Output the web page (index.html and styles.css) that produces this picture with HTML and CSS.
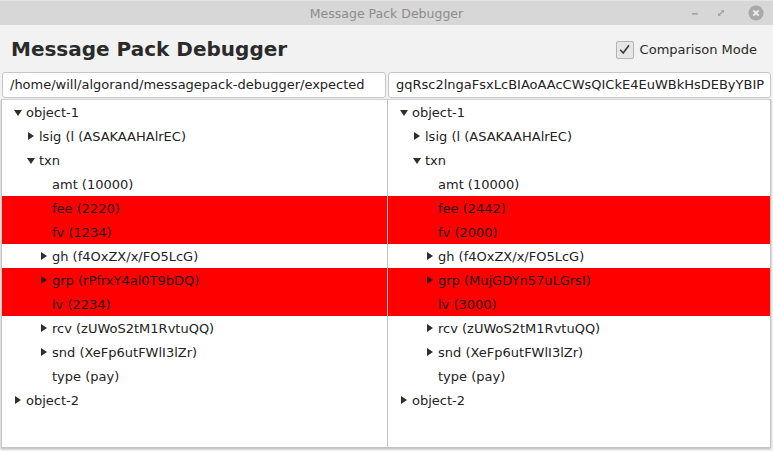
FILE: index.html
```html
<!DOCTYPE html>
<html>
<head>
<meta charset="utf-8">
<link rel="stylesheet" href="styles.css">
</head>
<body>
<div class="window">
  <div class="titlebar">
    <span class="title">Message Pack Debugger</span>
    <div class="controls">
      <svg class="ctl" width="14" height="14" viewBox="0 0 14 14"><rect x="4" y="7" width="6" height="1.6" fill="#a4a4a4"/></svg>
      <svg class="ctl" width="14" height="14" viewBox="0 0 14 14"><path d="M4 10 L4 7 L7 10 Z M10 4 L10 7 L7 4 Z" fill="#a4a4a4"/><path d="M5 9 L9 5" stroke="#a4a4a4" stroke-width="1.6"/></svg>
      <svg class="ctl close" width="16" height="16" viewBox="0 0 16 16"><circle cx="8" cy="8" r="7.5" fill="#a9a9a9"/><path d="M5.3 5.3 L10.7 10.7 M10.7 5.3 L5.3 10.7" stroke="#f2f2f2" stroke-width="1.8"/></svg>
    </div>
  </div>
  <div class="app">
    <div class="header">
      <h1 class="heading">Message Pack Debugger</h1>
      <label class="check">
        <span class="box"><svg width="13" height="13" viewBox="0 0 13 13"><path d="M2.2 6.8 L5.2 10 L11 2.2" fill="none" stroke="#3a3a3a" stroke-width="1.6"/></svg></span>
        <span class="check-label">Comparison Mode</span>
      </label>
    </div>
    <div class="fields">
      <div class="field">/home/will/algorand/messagepack-debugger/expected</div>
      <div class="field">gqRsc2lngaFsxLcBIAoAAcCWsQICkE4EuWBkHsDEByYBIP</div>
    </div>
    <div class="panes">
      <div class="pane">
        <div class="row l0"><span class="arrow down"></span>object-1</div>
        <div class="row l1"><span class="arrow right"></span>lsig (l (ASAKAAHAlrEC)</div>
        <div class="row l1"><span class="arrow down"></span>txn</div>
        <div class="row l2"><span class="arrow"></span>amt (10000)</div>
        <div class="row l2 diff"><span class="arrow"></span>fee (2220)</div>
        <div class="row l2 diff"><span class="arrow"></span>fv (1234)</div>
        <div class="row l2"><span class="arrow right"></span>gh (f4OxZX/x/FO5LcG)</div>
        <div class="row l2 diff"><span class="arrow right"></span>grp (rPfrxY4al0T9bDQ)</div>
        <div class="row l2 diff"><span class="arrow"></span>lv (2234)</div>
        <div class="row l2"><span class="arrow right"></span>rcv (zUWoS2tM1RvtuQQ)</div>
        <div class="row l2"><span class="arrow right"></span>snd (XeFp6utFWlI3lZr)</div>
        <div class="row l2"><span class="arrow"></span>type (pay)</div>
        <div class="row l0"><span class="arrow right"></span>object-2</div>
      </div>
      <div class="pane">
        <div class="row l0"><span class="arrow down"></span>object-1</div>
        <div class="row l1"><span class="arrow right"></span>lsig (l (ASAKAAHAlrEC)</div>
        <div class="row l1"><span class="arrow down"></span>txn</div>
        <div class="row l2"><span class="arrow"></span>amt (10000)</div>
        <div class="row l2 diff"><span class="arrow"></span>fee (2442)</div>
        <div class="row l2 diff"><span class="arrow"></span>fv (2000)</div>
        <div class="row l2"><span class="arrow right"></span>gh (f4OxZX/x/FO5LcG)</div>
        <div class="row l2 diff"><span class="arrow right"></span>grp (MujGDYn57uLGrsI)</div>
        <div class="row l2 diff"><span class="arrow"></span>lv (3000)</div>
        <div class="row l2"><span class="arrow right"></span>rcv (zUWoS2tM1RvtuQQ)</div>
        <div class="row l2"><span class="arrow right"></span>snd (XeFp6utFWlI3lZr)</div>
        <div class="row l2"><span class="arrow"></span>type (pay)</div>
        <div class="row l0"><span class="arrow right"></span>object-2</div>
      </div>
    </div>
  </div>
</div>
</body>
</html>
```
FILE: styles.css
```css
* { box-sizing: border-box; }
html, body { margin: 0; padding: 0; }
body {
  width: 773px;
  height: 451px;
  overflow: hidden;
  background: #f2f2f2;
  font-family: "DejaVu Sans", sans-serif;
  color: #222;
}
.window { display: flex; flex-direction: column; height: 451px; }
.titlebar {
  height: 25px;
  flex: none;
  background: #d7d7d7;
  border-top: 1px solid #e4e4e4;
  display: flex;
  align-items: center;
  justify-content: center;
  position: relative;
}
.title {
  font-family: "DejaVu Sans", sans-serif;
  font-size: 12.5px;
  color: #8c8c8c;
}
.controls {
  position: absolute;
  right: 9px;
  top: 4px;
  display: flex;
  align-items: center;
  gap: 12px;
}
.ctl { display: block; }
.close { margin-left: 8px; }
.app {
  flex: 1;
  display: flex;
  flex-direction: column;
  padding: 0 2px 3px 1px;
}
.header {
  height: 47px;
  display: flex;
  align-items: center;
  justify-content: space-between;
  padding: 0 14px 0 10px;
}
.heading {
  margin: 0;
  font-size: 20px;
  font-weight: bold;
  color: #2a2a2a;
}
.check { display: flex; align-items: center; gap: 6px; margin-top: 2px; }
.box {
  width: 18px;
  height: 18px;
  border: 1px solid #b4b4b4;
  border-radius: 2px;
  background: #e6e6e6;
  display: flex;
  align-items: center;
  justify-content: center;
}
.box svg { display: block; }
.check-label { font-size: 13px; color: #2a2a2a; }
.fields {
  display: grid;
  grid-template-columns: 384px 1fr;
  gap: 2px;
  height: 26px;
  margin-left: 1px;
}
.field {
  background: #fff;
  border: 1px solid #c6c6c6;
  border-radius: 3px;
  font-size: 13px;
  line-height: 24px;
  padding: 0 7px;
  white-space: nowrap;
  overflow: hidden;
  color: #222;
}
.panes {
  flex: 1;
  display: grid;
  grid-template-columns: 385px 1fr;
  background: #fff;
  border: 1px solid #c4c4c4;
  border-top-color: #d0d0d0;
  margin-top: 1px;
  box-shadow: 0 1px 2px rgba(0,0,0,0.25);
}
.pane {
  padding-top: 0;
  overflow: hidden;
}
.pane + .pane { border-left: 1px solid #c4c4c4; }
.row {
  height: 24px;
  display: flex;
  align-items: center;
  font-size: 13px;
  white-space: nowrap;
  color: #222;
}
.row.diff { background: #ff0000; color: #231010; }
.l0 { padding-left: 11px; }
.l1 { padding-left: 24px; }
.l2 { padding-left: 37px; }
.arrow {
  width: 13px;
  height: 24px;
  flex: none;
  position: relative;
}
.arrow.down::before {
  content: "";
  position: absolute;
  left: 1px;
  top: 10px;
  border-left: 4px solid transparent;
  border-right: 4px solid transparent;
  border-top: 6px solid #2e2e2e;
}
.arrow.right::before {
  content: "";
  position: absolute;
  left: 2px;
  top: 8px;
  border-top: 4px solid transparent;
  border-bottom: 4px solid transparent;
  border-left: 6px solid #2e2e2e;
}
.diff .arrow.right::before { border-left-color: #3a1414; }
```
